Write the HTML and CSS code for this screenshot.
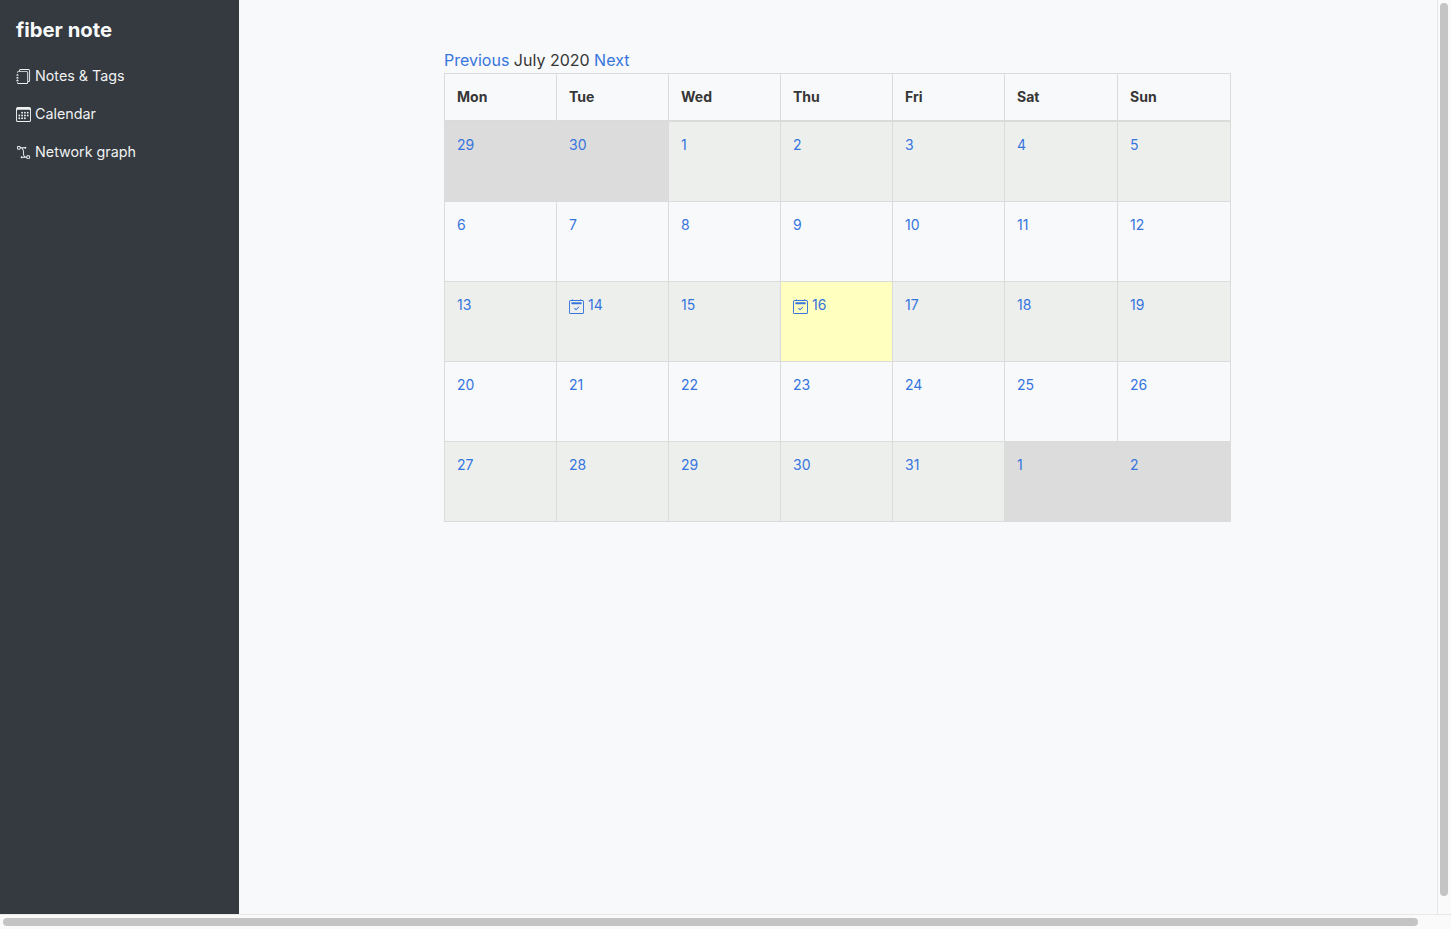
FILE: index.html
```html
<!DOCTYPE html>
<html lang="en">
  <head>
    <meta charset="UTF-8" />
    <title>fiber note</title>
    <link rel="stylesheet" href="styles.css">
  </head>
  <body>
    <div class="window">
      <div class="viewport">
        <nav class="sidebar">
          <a href="#" class="brand">fiber note</a>
          <a href="#" class="nav-link">
            <svg class="icon" viewBox="0 0 16 16" fill="currentColor">
              <path d="M5 0h8a2 2 0 0 1 2 2v10a2 2 0 0 1-2 2 2 2 0 0 1-2 2H3a2 2 0 0 1-2-2h1a1 1 0 0 0 1 1h8a1 1 0 0 0 1-1V4a1 1 0 0 0-1-1H3a1 1 0 0 0-1 1H1a2 2 0 0 1 2-2h8a2 2 0 0 1 2 2v9a1 1 0 0 0 1-1V2a1 1 0 0 0-1-1H5a1 1 0 0 0-1 1H3a2 2 0 0 1 2-2" />
              <path d="M1 6v-.5a.5.5 0 0 1 1 0V6h.5a.5.5 0 0 1 0 1h-2a.5.5 0 0 1 0-1zm0 3v-.5a.5.5 0 0 1 1 0V9h.5a.5.5 0 0 1 0 1h-2a.5.5 0 0 1 0-1zm0 3v-.5a.5.5 0 0 1 1 0V12h.5a.5.5 0 0 1 0 1h-2a.5.5 0 0 1 0-1z" />
            </svg>
            Notes &amp; Tags
          </a>
          <a href="#" class="nav-link">
            <svg class="icon" viewBox="0 0 16 16" fill="currentColor">
              <path d="M14 0H2a2 2 0 0 0-2 2v12a2 2 0 0 0 2 2h12a2 2 0 0 0 2-2V2a2 2 0 0 0-2-2M1 3.857C1 3.384 1.448 3 2 3h12c.552 0 1 .384 1 .857v10.286c0 .473-.448.857-1 .857H2c-.552 0-1-.384-1-.857z" />
              <path d="M6.5 7a1 1 0 1 0 0-2 1 1 0 0 0 0 2m3 0a1 1 0 1 0 0-2 1 1 0 0 0 0 2m3 0a1 1 0 1 0 0-2 1 1 0 0 0 0 2m-9 3a1 1 0 1 0 0-2 1 1 0 0 0 0 2m3 0a1 1 0 1 0 0-2 1 1 0 0 0 0 2m3 0a1 1 0 1 0 0-2 1 1 0 0 0 0 2m3 0a1 1 0 1 0 0-2 1 1 0 0 0 0 2m-9 3a1 1 0 1 0 0-2 1 1 0 0 0 0 2m3 0a1 1 0 1 0 0-2 1 1 0 0 0 0 2m3 0a1 1 0 1 0 0-2 1 1 0 0 0 0 2" />
            </svg>
            Calendar
          </a>
          <a href="#" class="nav-link">
            <svg class="icon" viewBox="0 0 16 16" fill="currentColor">
              <path fill-rule="evenodd" d="M1 2.5A1.5 1.5 0 0 1 2.5 1h1A1.5 1.5 0 0 1 5 2.5h4.134a1 1 0 1 1 0 1h-2.01c.18.18.34.381.484.605.638.992.892 2.354.892 3.895 0 1.993.257 3.092.713 3.7.356.476.895.721 1.787.784A1.5 1.5 0 0 1 12.5 11h1a1.5 1.5 0 0 1 1.5 1.5v1a1.5 1.5 0 0 1-1.5 1.5h-1a1.5 1.5 0 0 1-1.5-1.5H6.866a1 1 0 1 1 0-1h1.711a2.839 2.839 0 0 1-.165-.2C7.743 11.407 7.5 10.007 7.5 8c0-1.46-.246-2.597-.733-3.355-.39-.605-.952-1-1.767-1.112A1.5 1.5 0 0 1 3.5 5h-1A1.5 1.5 0 0 1 1 3.5zM2.5 2a.5.5 0 0 0-.5.5v1a.5.5 0 0 0 .5.5h1a.5.5 0 0 0 .5-.5v-1a.5.5 0 0 0-.5-.5zm10 10a.5.5 0 0 0-.5.5v1a.5.5 0 0 0 .5.5h1a.5.5 0 0 0 .5-.5v-1a.5.5 0 0 0-.5-.5z" />
            </svg>
            Network graph
          </a>
        </nav>

        <main class="content">
          <div class="calendar">
            <div class="month-nav">
              <a href="#">Previous</a> July 2020 <a href="#">Next</a>
            </div>
            <table class="month">
              <thead>
                <tr>
                  <th>Mon</th><th>Tue</th><th>Wed</th><th>Thu</th><th>Fri</th><th>Sat</th><th>Sun</th>
                </tr>
              </thead>
              <tbody>
                <tr>
                  <td class="other"><a href="#">29</a></td>
                  <td class="other"><a href="#">30</a></td>
                  <td><a href="#">1</a></td>
                  <td><a href="#">2</a></td>
                  <td><a href="#">3</a></td>
                  <td><a href="#">4</a></td>
                  <td><a href="#">5</a></td>
                </tr>
                <tr>
                  <td><a href="#">6</a></td>
                  <td><a href="#">7</a></td>
                  <td><a href="#">8</a></td>
                  <td><a href="#">9</a></td>
                  <td><a href="#">10</a></td>
                  <td><a href="#">11</a></td>
                  <td><a href="#">12</a></td>
                </tr>
                <tr>
                  <td><a href="#">13</a></td>
                  <td>
                    <a href="#">
                      <svg class="icon" viewBox="0 0 16 16" fill="currentColor">
                        <path d="M10.854 8.146a.5.5 0 0 1 0 .708l-3 3a.5.5 0 0 1-.708 0l-1.5-1.5a.5.5 0 0 1 .708-.708L7.5 10.793l2.646-2.647a.5.5 0 0 1 .708 0" />
                        <path d="M3.5 0a.5.5 0 0 1 .5.5V1h8V.5a.5.5 0 0 1 1 0V1h1a2 2 0 0 1 2 2v11a2 2 0 0 1-2 2H2a2 2 0 0 1-2-2V3a2 2 0 0 1 2-2h1V.5a.5.5 0 0 1 .5-.5M2 2a1 1 0 0 0-1 1v11a1 1 0 0 0 1 1h12a1 1 0 0 0 1-1V3a1 1 0 0 0-1-1z" />
                        <path d="M2.5 4a.5.5 0 0 1 .5-.5h10a.5.5 0 0 1 .5.5v1a.5.5 0 0 1-.5.5H3a.5.5 0 0 1-.5-.5z" />
                      </svg>
                      14
                    </a>
                  </td>
                  <td><a href="#">15</a></td>
                  <td class="today">
                    <a href="#">
                      <svg class="icon" viewBox="0 0 16 16" fill="currentColor">
                        <path d="M10.854 8.146a.5.5 0 0 1 0 .708l-3 3a.5.5 0 0 1-.708 0l-1.5-1.5a.5.5 0 0 1 .708-.708L7.5 10.793l2.646-2.647a.5.5 0 0 1 .708 0" />
                        <path d="M3.5 0a.5.5 0 0 1 .5.5V1h8V.5a.5.5 0 0 1 1 0V1h1a2 2 0 0 1 2 2v11a2 2 0 0 1-2 2H2a2 2 0 0 1-2-2V3a2 2 0 0 1 2-2h1V.5a.5.5 0 0 1 .5-.5M2 2a1 1 0 0 0-1 1v11a1 1 0 0 0 1 1h12a1 1 0 0 0 1-1V3a1 1 0 0 0-1-1z" />
                        <path d="M2.5 4a.5.5 0 0 1 .5-.5h10a.5.5 0 0 1 .5.5v1a.5.5 0 0 1-.5.5H3a.5.5 0 0 1-.5-.5z" />
                      </svg>
                      16
                    </a>
                  </td>
                  <td><a href="#">17</a></td>
                  <td><a href="#">18</a></td>
                  <td><a href="#">19</a></td>
                </tr>
                <tr>
                  <td><a href="#">20</a></td>
                  <td><a href="#">21</a></td>
                  <td><a href="#">22</a></td>
                  <td><a href="#">23</a></td>
                  <td><a href="#">24</a></td>
                  <td><a href="#">25</a></td>
                  <td><a href="#">26</a></td>
                </tr>
                <tr>
                  <td><a href="#">27</a></td>
                  <td><a href="#">28</a></td>
                  <td><a href="#">29</a></td>
                  <td><a href="#">30</a></td>
                  <td><a href="#">31</a></td>
                  <td class="other"><a href="#">1</a></td>
                  <td class="other"><a href="#">2</a></td>
                </tr>
              </tbody>
            </table>
          </div>
        </main>

        <div class="scroll-y"><div class="thumb-y"></div></div>
      </div>
      <div class="scroll-x"><div class="thumb-x"></div></div>
    </div>
  </body>
</html>
```

FILE: styles.css
```css
html,
body {
  height: 100%;
}
body {
  margin: 0;
  overflow: hidden;
  font-family: Inter, "Liberation Sans", sans-serif;
  font-size: 14px;
  color: #363636;
  background-color: #f8f9fa;
}
a {
  color: #3675de;
  text-decoration: none;
}
.window {
  display: flex;
  flex-direction: column;
  height: 100%;
}
.viewport {
  display: flex;
  flex: 1;
  min-height: 0;
}
.sidebar {
  display: flex;
  flex-direction: column;
  width: 239px;
  flex-shrink: 0;
  box-sizing: border-box;
  padding: 18px 16px;
  background-color: #343a40;
}
.brand {
  color: #f8f9fa;
  font-size: 20.3px;
  font-weight: 700;
  line-height: 24px;
  margin-bottom: 15px;
}
.nav-link {
  display: block;
  color: #f0f1f2;
  font-size: 14.3px;
  line-height: 22px;
  padding: 8px 0;
}
.icon {
  width: 15px;
  height: 15px;
  vertical-align: -3px;
}
.content {
  flex: 1;
  min-width: 0;
  padding: 48px 1px 0 0;
}
.calendar {
  width: 787px;
  margin: 0 auto;
}
.month-nav {
  font-size: 16px;
  line-height: 25px;
}
.month {
  width: 787px;
  table-layout: fixed;
  border-collapse: collapse;
}
.month th,
.month td {
  border: 1px solid #dbdbdb;
  padding: 0 12px;
  text-align: left;
  vertical-align: top;
}
.month th {
  width: 112px;
  height: 47px;
  box-sizing: border-box;
  border-bottom-width: 2px;
  font-weight: 700;
  vertical-align: middle;
}
.month th:nth-child(n + 6) {
  width: 113px;
}
.month td {
  height: 80px;
  box-sizing: border-box;
  padding-top: 12px;
  line-height: 22px;
}
.month tbody tr:first-child td {
  height: 81px;
}
.month td .icon {
  vertical-align: -4px;
}
.month tbody tr:nth-child(odd) td {
  background-color: #edefed;
}
.month tbody tr td.other {
  background-color: #dcdcdc;
}
.month tbody tr td.today {
  background-color: #ffffbf;
}
.scroll-y {
  width: 14px;
  flex-shrink: 0;
  box-sizing: border-box;
  border-left: 1px solid #e8e8e8;
  background-color: #fafafa;
  padding: 3px 3px 0 2px;
}
.thumb-y {
  height: 893px;
  border-radius: 4px;
  background-color: #c4c4c4;
}
.scroll-x {
  height: 15px;
  flex-shrink: 0;
  box-sizing: border-box;
  border-top: 1px solid #e8e8e8;
  background-color: #fafafa;
  padding: 3px 0 0 3px;
}
.thumb-x {
  width: 1415px;
  height: 8px;
  border-radius: 4px;
  background-color: #c4c4c4;
}
```
